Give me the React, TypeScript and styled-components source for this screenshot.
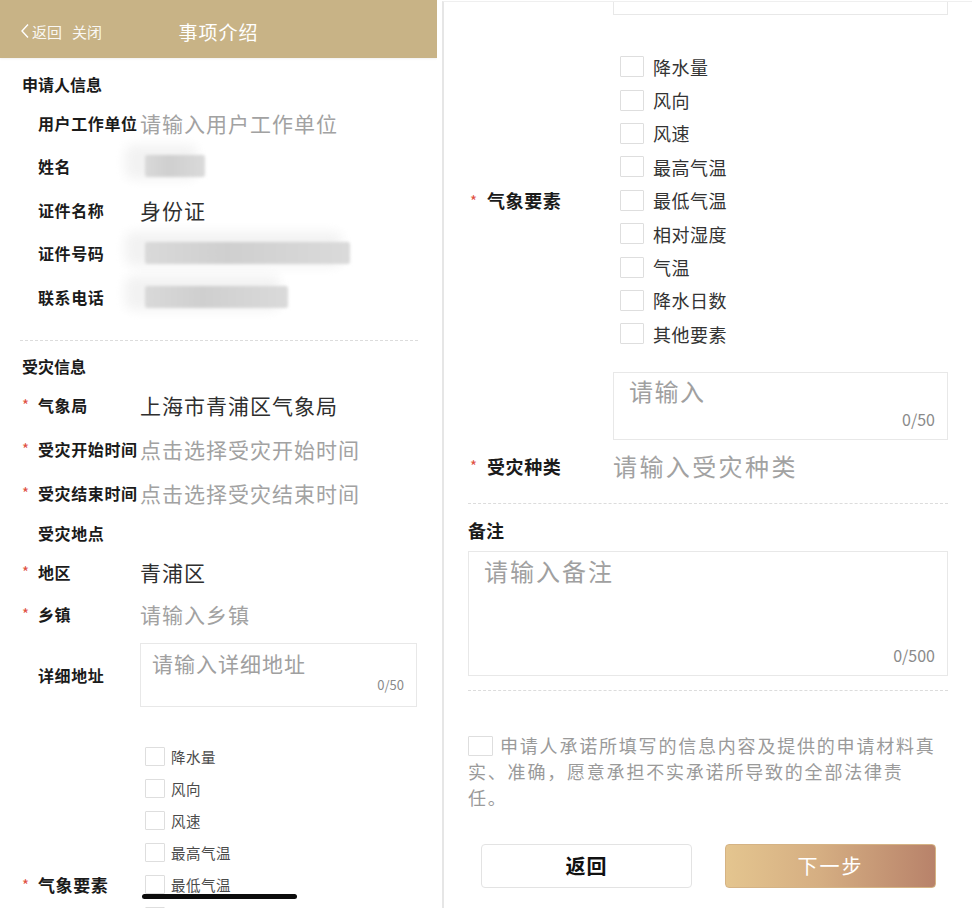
import React from 'react'
import styled, { createGlobalStyle } from 'styled-components'

const GlobalStyle = createGlobalStyle`
  html, body {
    margin: 0;
    padding: 0;
    background: #fff;
  }
  body {
    font-family: "Noto Sans CJK SC", "Noto Sans", sans-serif;
  }
  * {
    box-sizing: border-box;
  }
`

const ELEMENTS = ['降水量', '风向', '风速', '最高气温', '最低气温', '相对湿度', '气温', '降水日数', '其他要素']

const Page = styled.div`
  display: flex;
  align-items: flex-start;
  width: 972px;
  height: 908px;
  overflow: hidden;
  background: #fff;
`

/* ---------- left: phone screenshot ---------- */

const Phone = styled.div`
  position: relative;
  flex-shrink: 0;
  width: 437px;
  height: 908px;
  overflow: hidden;
  background: #fff;
`

const Header = styled.header`
  display: grid;
  grid-template-columns: 1fr auto 1fr;
  align-items: center;
  height: 58px;
  padding: 4px 20px 0;
  background: #c8b386;
  color: #fff;
  box-shadow: 0 1px 2px rgba(0, 0, 0, 0.06);
`

const HeaderNav = styled.div`
  display: flex;
  align-items: center;
  gap: 10px;
  font-size: 15px;
  color: rgba(255, 255, 255, 0.92);
  > span {
    display: flex;
    align-items: center;
  }
  svg {
    margin-right: 2px;
  }
`

const HeaderTitle = styled.div`
  font-size: 19px;
  letter-spacing: 1px;
`

const Section = styled.section`
  padding: 0 19px 0 20px;
`

const SectionTitle = styled.div<{ $top: number }>`
  margin-top: ${({ $top }) => $top}px;
  padding-left: 2px;
  font-size: 16px;
  font-weight: 700;
  line-height: 20px;
  color: #1a1a1a;
`

const Row = styled.div<{ $h?: number; $top?: number }>`
  display: flex;
  align-items: center;
  height: ${({ $h }) => ($h ? `${$h}px` : 'auto')};
  margin-top: ${({ $top }) => $top ?? 0}px;
`

const Star = styled.span<{ $w: number }>`
  flex-shrink: 0;
  width: ${({ $w }) => $w}px;
  padding-left: 2px;
  font-size: 15px;
  color: #e0503f;
`

const Label = styled.span<{ $w: number; $size: number }>`
  flex-shrink: 0;
  width: ${({ $w }) => $w}px;
  font-size: ${({ $size }) => $size}px;
  font-weight: 700;
  letter-spacing: 0.6px;
  color: #1b1b1b;
  white-space: nowrap;
`

const Value = styled.span<{ $muted?: boolean; $size: number; $gap?: number }>`
  font-size: ${({ $size }) => $size}px;
  letter-spacing: ${({ $gap }) => $gap ?? 1}px;
  color: ${({ $muted }) => ($muted ? '#a2a2a2' : '#2f2f2f')};
  white-space: nowrap;
`

const Masked = styled.div<{ $w: number }>`
  position: relative;
  width: ${({ $w }) => $w}px;
  height: 22px;
  margin-left: 5px;
  background: linear-gradient(90deg, #d9d9d9, #cfcfcf 40%, #dadada);
  border-radius: 2px;
  filter: blur(1.5px);
  box-shadow: -14px -4px 12px 6px #f2f2f2;
`

const Dashed = styled.div<{ $top: number }>`
  margin-top: ${({ $top }) => $top}px;
  border-top: 1px dashed #dcdcdc;
`

const TextBox = styled.div<{ $w: number; $h: number; $pad: number; $ml?: number; $padTop?: number }>`
  display: flex;
  flex-direction: column;
  justify-content: space-between;
  flex-shrink: 0;
  width: ${({ $w }) => $w}px;
  height: ${({ $h }) => $h}px;
  margin-left: ${({ $ml }) => $ml ?? 0}px;
  padding: ${({ $padTop }) => $padTop ?? 7}px 12px 0 ${({ $pad }) => $pad}px;
  border: 1px solid #e8e8e8;
  background: #fff;
`

const Placeholder = styled.div<{ $size: number; $gap?: number }>`
  font-size: ${({ $size }) => $size}px;
  line-height: 28px;
  letter-spacing: ${({ $gap }) => $gap ?? 1}px;
  color: #a0a0a0;
`

const Counter = styled.div<{ $size: number; $bottom: number }>`
  align-self: flex-end;
  margin-bottom: ${({ $bottom }) => $bottom}px;
  font-size: ${({ $size }) => $size}px;
  line-height: 16px;
  color: #8a8a8a;
`

const CheckList = styled.div<{ $ml: number }>`
  display: flex;
  flex-direction: column;
  margin-left: ${({ $ml }) => $ml}px;
`

const CheckItem = styled.label<{ $row: number; $size: number; $gap: number; $dark?: boolean }>`
  display: flex;
  align-items: center;
  gap: ${({ $gap }) => $gap}px;
  height: ${({ $row }) => $row}px;
  font-size: ${({ $size }) => $size}px;
  letter-spacing: 0.5px;
  color: ${({ $dark }) => ($dark ? '#333' : '#4a4a4a')};
`

const Box = styled.span<{ $w: number; $h: number }>`
  display: inline-block;
  flex-shrink: 0;
  width: ${({ $w }) => $w}px;
  height: ${({ $h }) => $h}px;
  border: 1px solid #dedede;
  border-radius: 1px;
  background: #fff;
  vertical-align: middle;
`

const HomeBar = styled.div`
  position: absolute;
  left: 142px;
  bottom: 9px;
  width: 155px;
  height: 5px;
  border-radius: 3px;
  background: #0c0c0c;
`

/* ---------- right: desktop screenshot ---------- */

const Desk = styled.div`
  flex: 1;
  height: 907px;
  margin: 1px 0 0 5px;
  padding: 0 24px;
  border-left: 2px solid #e6e6e6;
  border-top: 1px solid #efefef;
  overflow: hidden;
  background: #fff;
`

const CutBox = styled.div`
  width: 335px;
  height: 13px;
  margin-left: 145px;
  border: 1px solid #e8e8e8;
  border-top: none;
`

const BigTitle = styled.div<{ $top: number }>`
  margin-top: ${({ $top }) => $top}px;
  font-size: 18px;
  font-weight: 700;
  line-height: 22px;
  color: #1a1a1a;
`

const Pledge = styled.p`
  width: 470px;
  margin: 41px 0 0;
  font-size: 18px;
  line-height: 26px;
  letter-spacing: 1.8px;
  color: #9a9a9a;
  ${Box} {
    margin: -4px 7px 0 0;
  }
`

const Actions = styled.div`
  display: flex;
  justify-content: space-between;
  margin-top: 34px;
  padding: 0 12px 0 13px;
`

const Button = styled.button<{ $primary?: boolean }>`
  width: 211px;
  height: 44px;
  border-radius: 4px;
  border: 1px solid ${({ $primary }) => ($primary ? '#d5b384' : '#e3e3e3')};
  background: ${({ $primary }) => ($primary ? 'linear-gradient(90deg, #e4c58f, #d5ae82 45%, #b8826a)' : '#fff')};
  color: ${({ $primary }) => ($primary ? '#fff' : '#111')};
  font-family: inherit;
  font-size: 20px;
  font-weight: ${({ $primary }) => ($primary ? 400 : 700)};
  letter-spacing: ${({ $primary }) => ($primary ? 2 : 1)}px;
`

function Chevron() {
  return (
    <svg width="10" height="16" viewBox="0 0 10 16">
      <path d="M8 1.5 L2 8 L8 14.5" fill="none" stroke="#fff" strokeWidth="1.4" />
    </svg>
  )
}

export default function App() {
  return (
    <>
      <GlobalStyle />
      <Page>
        <Phone>
          <Header>
            <HeaderNav>
              <span>
                <Chevron />
                返回
              </span>
              <span>关闭</span>
            </HeaderNav>
            <HeaderTitle>事项介绍</HeaderTitle>
            <div />
          </Header>

          <Section>
            <SectionTitle $top={16}>申请人信息</SectionTitle>
            <Row $h={43.5} $top={7}>
              <Star $w={18} />
              <Label $w={102} $size={16}>用户工作单位</Label>
              <Value $muted $size={21}>请输入用户工作单位</Value>
            </Row>
            <Row $h={43.5}>
              <Star $w={18} />
              <Label $w={102} $size={16}>姓名</Label>
              <Masked $w={60} />
            </Row>
            <Row $h={43.5}>
              <Star $w={18} />
              <Label $w={102} $size={16}>证件名称</Label>
              <Value $size={21}>身份证</Value>
            </Row>
            <Row $h={43.5}>
              <Star $w={18} />
              <Label $w={102} $size={16}>证件号码</Label>
              <Masked $w={205} />
            </Row>
            <Row $h={43.5}>
              <Star $w={18} />
              <Label $w={102} $size={16}>联系电话</Label>
              <Masked $w={143} />
            </Row>

            <Dashed $top={21} />

            <SectionTitle $top={15}>受灾信息</SectionTitle>
            <Row $h={44} $top={7}>
              <Star $w={18}>*</Star>
              <Label $w={102} $size={16}>气象局</Label>
              <Value $size={21}>上海市青浦区气象局</Value>
            </Row>
            <Row $h={44}>
              <Star $w={18}>*</Star>
              <Label $w={102} $size={16}>受灾开始时间</Label>
              <Value $muted $size={21}>点击选择受灾开始时间</Value>
            </Row>
            <Row $h={44}>
              <Star $w={18}>*</Star>
              <Label $w={102} $size={16}>受灾结束时间</Label>
              <Value $muted $size={21}>点击选择受灾结束时间</Value>
            </Row>
            <Row $h={36}>
              <Star $w={18} />
              <Label $w={102} $size={16}>受灾地点</Label>
            </Row>
            <Row $h={42}>
              <Star $w={18}>*</Star>
              <Label $w={102} $size={16}>地区</Label>
              <Value $size={21}>青浦区</Value>
            </Row>
            <Row $h={42}>
              <Star $w={18}>*</Star>
              <Label $w={102} $size={16}>乡镇</Label>
              <Value $muted $size={21}>请输入乡镇</Value>
            </Row>
            <Row $top={8}>
              <Star $w={18} />
              <Label $w={102} $size={16}>详细地址</Label>
              <TextBox $w={277} $h={64} $pad={11} $padTop={5}>
                <Placeholder $size={21}>请输入详细地址</Placeholder>
                <Counter $size={13} $bottom={13}>0/50</Counter>
              </TextBox>
            </Row>
            <Row $top={34}>
              <Star $w={18}>*</Star>
              <Label $w={102} $size={17}>气象要素</Label>
              <CheckList $ml={5}>
                {ELEMENTS.map((name) => (
                  <CheckItem key={name} $row={32} $size={14.5} $gap={6}>
                    <Box $w={20} $h={19} />
                    {name}
                  </CheckItem>
                ))}
              </CheckList>
            </Row>
          </Section>
          <HomeBar />
        </Phone>

        <Desk>
          <CutBox />
          <Row $top={35}>
            <Star $w={19}>*</Star>
            <Label $w={126} $size={18}>气象要素</Label>
            <CheckList $ml={7}>
              {ELEMENTS.map((name) => (
                <CheckItem key={name} $row={33.4} $size={18} $gap={9} $dark>
                  <Box $w={24} $h={21} />
                  {name}
                </CheckItem>
              ))}
            </CheckList>
          </Row>
          <Row $top={21}>
            <TextBox $w={335} $h={68} $pad={15} $ml={145} $padTop={4}>
              <Placeholder $size={24} $gap={1.5}>请输入</Placeholder>
              <Counter $size={16} $bottom={12}>0/50</Counter>
            </TextBox>
          </Row>
          <Row $h={40} $top={6}>
            <Star $w={19}>*</Star>
            <Label $w={126} $size={18}>受灾种类</Label>
            <Value $muted $size={24} $gap={2.4}>请输入受灾种类</Value>
          </Row>

          <Dashed $top={17} />

          <BigTitle $top={15}>备注</BigTitle>
          <Row $top={10}>
            <TextBox $w={480} $h={125} $pad={15} $padTop={5}>
              <Placeholder $size={24} $gap={2}>请输入备注</Placeholder>
              <Counter $size={16} $bottom={12}>0/500</Counter>
            </TextBox>
          </Row>

          <Dashed $top={14} />

          <Pledge>
            <Box $w={25} $h={20} />
            申请人承诺所填写的信息内容及提供的申请材料真实、准确，愿意承担不实承诺所导致的全部法律责任。
          </Pledge>

          <Actions>
            <Button>返回</Button>
            <Button $primary>下一步</Button>
          </Actions>
        </Desk>
      </Page>
    </>
  )
}
